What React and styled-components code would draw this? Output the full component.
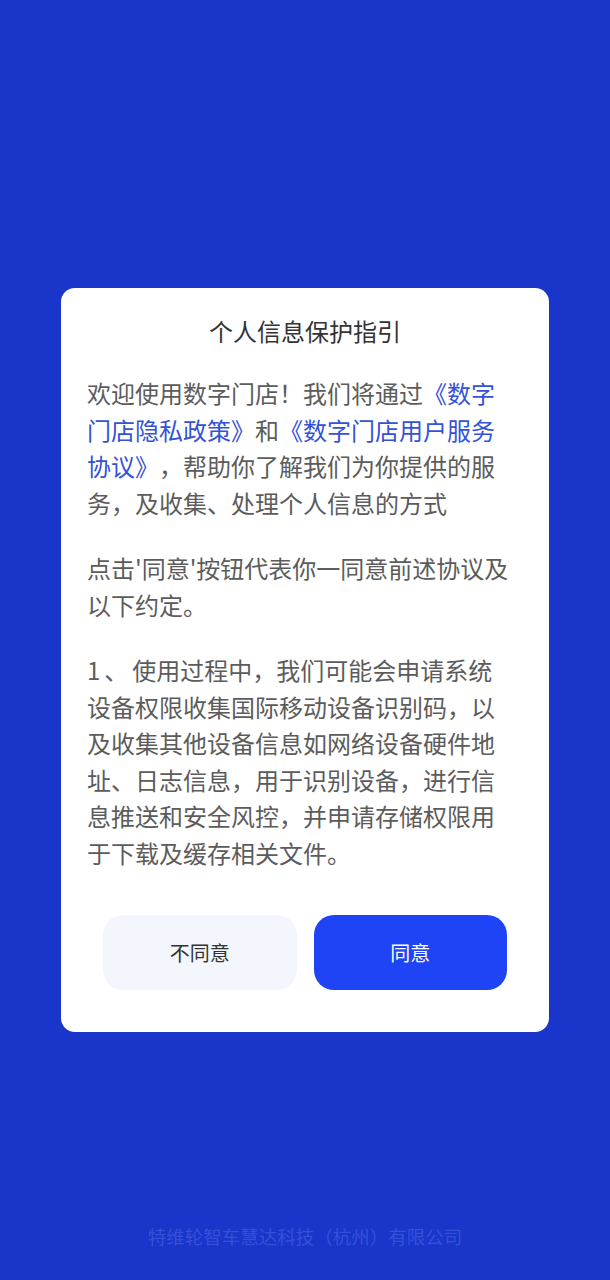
import styled, { createGlobalStyle } from "styled-components";

const GlobalStyle = createGlobalStyle`
  html, body {
    margin: 0;
    padding: 0;
    background: #1a35c9;
  }
  body {
    font-family: "Noto Sans CJK SC", "Noto Sans", sans-serif;
    text-spacing-trim: space-all;
  }
`;

const Page = styled.div`
  height: 1280px;
  display: flex;
  flex-direction: column;
  align-items: center;
  background: #1a35c9;
  padding-top: 288px;
  box-sizing: border-box;
`;

const Card = styled.div`
  width: 488px;
  box-sizing: border-box;
  background: #fff;
  border-radius: 14px;
  padding: 28px 0 42px;
  display: flex;
  flex-direction: column;
`;

const Title = styled.h1`
  margin: 0;
  font-size: 24px;
  line-height: 30px;
  font-weight: 400;
  color: #333;
  text-align: center;
`;

const Body = styled.div`
  margin-top: 29px;
  padding: 0 38px 0 26px;
  display: flex;
  flex-direction: column;
  gap: 29px;
`;

const Para = styled.p`
  margin: 0;
  font-size: 24px;
  line-height: 36.5px;
  color: #5c5c5c;
  text-spacing-trim: space-all;
`;

const Link = styled.span`
  color: #3452d6;
`;

// list marker: the reference font sets "1、" a bit wider than Noto
const Marker = styled.span`
  letter-spacing: 4px;
`;

const Actions = styled.div`
  margin-top: 44px;
  padding: 0 42px;
  display: flex;
  gap: 17px;
`;

const Button = styled.button`
  flex: 1;
  height: 75px;
  border: none;
  border-radius: 20px;
  font-family: inherit;
  font-size: 20px;
  background: ${(p) => (p.$primary ? "#1e44f5" : "#f4f6fd")};
  color: ${(p) => (p.$primary ? "#fff" : "#333")};
  cursor: pointer;
`;

const Footer = styled.div`
  margin-top: auto;
  margin-bottom: 31px;
  font-size: 18.5px;
  line-height: 26px;
  color: #3451d8;
  text-spacing-trim: space-all;
`;

export default function App() {
  return (
    <>
      <GlobalStyle />
      <Page>
        <Card>
          <Title>个人信息保护指引</Title>
          <Body>
            <Para>
              欢迎使用数字门店！我们将通过<Link>《数字门店隐私政策》</Link>和<Link>《数字门店用户服务协议》</Link>，帮助你了解我们为你提供的服务，及收集、处理个人信息的方式
            </Para>
            <Para>点击'同意'按钮代表你一同意前述协议及以下约定。</Para>
            <Para>
              <Marker>1、</Marker>使用过程中，我们可能会申请系统设备权限收集国际移动设备识别码，以及收集其他设备信息如网络设备硬件地址、日志信息，用于识别设备，进行信息推送和安全风控，并申请存储权限用于下载及缓存相关文件。
            </Para>
          </Body>
          <Actions>
            <Button>不同意</Button>
            <Button $primary>同意</Button>
          </Actions>
        </Card>
        <Footer>特维轮智车慧达科技（杭州）有限公司</Footer>
      </Page>
    </>
  );
}
